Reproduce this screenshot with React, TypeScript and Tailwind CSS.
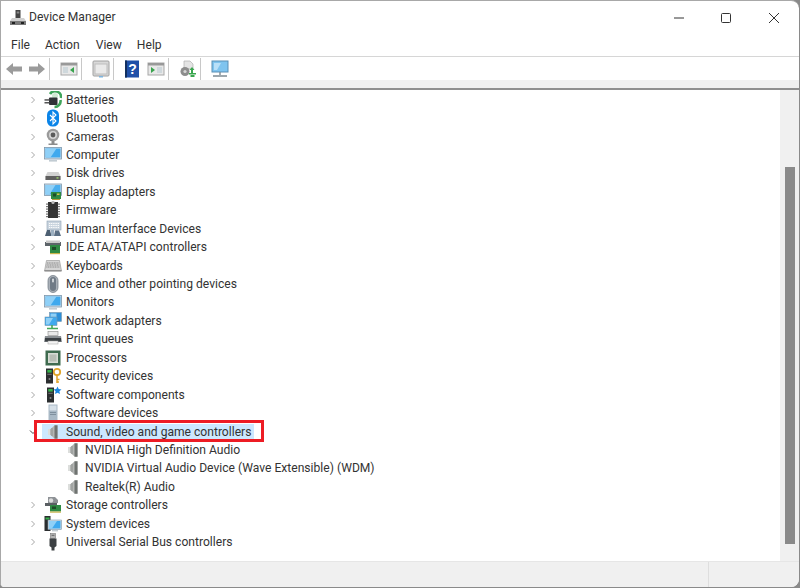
import React from "react";

type IconProps = { children: React.ReactNode; size?: number; className?: string };
const Svg = ({ children, size = 18, className = "" }: IconProps) => (
  <svg width={size} height={size} viewBox="0 0 18 18" className={`shrink-0 ${className}`}>
    {children}
  </svg>
);

const Battery = () => (
  <Svg>
    <path d="M6 3a6 6 0 0 1 11 4" fill="none" stroke="#3fa45b" strokeWidth="2.6" />
    <path d="M16.500 9a6 6 0 0 1-6 7" fill="none" stroke="#3fa45b" strokeWidth="2.6" />
    <circle cx="11" cy="5" r="3" fill="#cfe8d2" />
    <rect x="5" y="6.500" width="8.500" height="7.500" rx="1" fill="#2f3337" />
    <rect x="0.500" y="8.200" width="5" height="1.500" fill="#555" />
    <rect x="0.500" y="11" width="5" height="1.500" fill="#555" />
  </Svg>
);
const Bluetooth = () => (
  <Svg>
    <rect x="3" y="0.500" width="12" height="17" rx="5.500" fill="#0a84e8" />
    <path d="M6 6l6 6-3 3V3l3 3-6 6" fill="none" stroke="#fff" strokeWidth="1.100" />
  </Svg>
);
const Camera = () => (
  <Svg>
    <circle cx="9" cy="7" r="6.300" fill="#9a9a9a" />
    <circle cx="9" cy="7" r="4" fill="#d4d4d4" />
    <circle cx="9" cy="7" r="2.400" fill="#5a5a5a" />
    <path d="M7.500 13h3v2.500h3V17h-9v-1.500h3z" fill="#8c8c8c" />
  </Svg>
);
const Monitor = () => (
  <Svg>
    <rect x="0.500" y="1.500" width="17" height="11.500" fill="#d3dde4" stroke="#7b97ad" strokeWidth="0.8" />
    <rect x="1.500" y="2.500" width="15" height="9" fill="#3fa9ee" />
    <path d="M1.500 2.500h11l-6 9h-5z" fill="#8fd0f7" />
    <rect x="5" y="14" width="8" height="1.600" fill="#c2ccd3" />
  </Svg>
);
const Disk = () => (
  <Svg>
    <path d="M3.500 8h11l2 4v4h-15v-4z" fill="#d2d2d2" />
    <rect x="1.500" y="12" width="15" height="4" fill="#5f5f5f" />
    <rect x="12.500" y="13.200" width="2" height="1.400" fill="#9ed36b" />
  </Svg>
);
const Display = () => (
  <Svg>
    <rect x="0.500" y="1" width="17" height="11.500" fill="#d3dde4" stroke="#7b97ad" strokeWidth="0.8" />
    <rect x="1.500" y="2" width="15" height="9.500" fill="#4aaeee" />
    <path d="M1.500 2h10l-6 9.500h-4z" fill="#8fd0f7" />
    <rect x="7" y="9" width="10" height="7" fill="#2f8a43" />
    <rect x="9" y="10.500" width="3" height="3" fill="#1e4d29" />
    <rect x="13" y="10.500" width="2.500" height="1.500" fill="#d6c24d" />
    <rect x="8" y="16" width="8" height="1" fill="#b59a3b" />
  </Svg>
);
const Firmware = () => (
  <Svg>
    <rect x="4" y="1" width="10" height="16" fill="#333" />
    <circle cx="9" cy="1.400" r="1.600" fill="#bbb" />
    {[2.5, 5, 7.5, 10, 12.5, 15].map((y) => (
      <g key={y}>
        <rect x="2" y={y} width="2.200" height="1.200" fill="#777" />
        <rect x="13.800" y={y} width="2.200" height="1.200" fill="#777" />
      </g>
    ))}
  </Svg>
);
const Hid = () => (
  <Svg>
    <rect x="3" y="1" width="14" height="9" fill="#c9d4de" stroke="#8fa2b4" strokeWidth="0.6" />
    <path d="M5 3.500h10M5 5.500h10M5 7.500h10" stroke="#fff" strokeWidth="0.9" strokeDasharray="1.2 0.6" />
    <path d="M1 16l2-6 3 0 1.500 6z" fill="#4c5f72" />
    <path d="M10 16l1-5.500h4l2 5.500z" fill="#5c7085" />
    <rect x="7" y="10" width="3" height="6" fill="#9db0c1" />
  </Svg>
);
const Ide = () => (
  <Svg>
    <path d="M1 4h16v4H1z" fill="#5d6469" />
    <rect x="2" y="2.500" width="14" height="2.500" fill="#c9c9c9" />
    <rect x="6" y="7" width="10" height="8" fill="#2f8a43" />
    <rect x="8" y="9" width="4" height="3" fill="#1e4d29" />
    <rect x="6" y="15" width="10" height="1.200" fill="#c9b34a" />
  </Svg>
);
const Keyboard = () => (
  <Svg>
    <path d="M2.500 3.500h13l2 10.500H.5z" fill="#d5d5d5" stroke="#8f8f8f" strokeWidth="0.6" />
    <path d="M3 6h12M2.600 8h12.800M2.300 10h13.400" stroke="#8a8a8a" strokeWidth="1" strokeDasharray="1.2 0.5" />
    <rect x="0.500" y="13" width="17" height="1.400" fill="#8f8f8f" />
  </Svg>
);
const Mouse = () => (
  <Svg>
    <rect x="4" y="0.500" width="10" height="17" rx="5" fill="#a9b0b8" stroke="#6b7580" strokeWidth="0.7" />
    <rect x="6" y="2" width="6" height="14" rx="3" fill="#6f7a86" />
    <rect x="8.200" y="3.500" width="1.600" height="4" rx="0.8" fill="#e3e6e9" />
  </Svg>
);
const Network = () => (
  <Svg>
    <rect x="5.500" y="0.500" width="12" height="9" fill="#2d8fd8" stroke="#7b97ad" strokeWidth="0.6" />
    <rect x="6.500" y="1.500" width="6" height="4" fill="#8fd0f7" />
    <rect x="1" y="5" width="12" height="8.500" fill="#3fa9ee" stroke="#7b97ad" strokeWidth="0.6" />
    <path d="M2 6h7l-4 6.500H2z" fill="#8fd0f7" />
    <path d="M3 16.500h11M8 13v3.500" stroke="#45a85a" strokeWidth="1.600" />
  </Svg>
);
const Printer = () => (
  <Svg>
    <rect x="4" y="1.500" width="10" height="4" fill="#e8e8e8" stroke="#8b8b8b" strokeWidth="0.6" />
    <path d="M1 6h16l1 6H0z" fill="#8a8f93" />
    <rect x="1" y="8" width="16" height="3.500" fill="#3a3f43" />
    <rect x="4" y="11" width="10" height="3" fill="#f4f4f4" stroke="#a0a0a0" strokeWidth="0.5" />
  </Svg>
);
const Processor = () => (
  <Svg>
    <rect x="1.500" y="1.500" width="15" height="15" fill="#3f6b4f" />
    <rect x="4" y="4" width="10" height="10" fill="#d7dcd4" />
    <rect x="5.500" y="5.500" width="7" height="7" fill="#b8beb5" />
  </Svg>
);
const Tower = ({ x = 2 }: { x?: number }) => (
  <g>
    <rect x={x} y="1.500" width="7" height="15" fill="#2b2e30" />
    <rect x={x + 1.3} y="3" width="4.400" height="2.600" fill="#35b24a" />
    <rect x={x + 1.3} y="6.800" width="4.400" height="1" fill="#777" />
    <rect x={x + 2.5} y="11" width="2" height="2" rx="1" fill="#888" />
  </g>
);
const Security = () => (
  <Svg>
    <Tower />
    <circle cx="13" cy="5" r="3.200" fill="none" stroke="#e0a52a" strokeWidth="1.800" />
    <path d="M13 8v8M13 12.500h2.500M13 15h2" stroke="#e0a52a" strokeWidth="1.500" />
  </Svg>
);
const SoftwareComp = () => (
  <Svg>
    <Tower x={3} />
    <path d="M13.500 0.500l1.200 2.600 2.800.3-2.100 1.900.6 2.800-2.500-1.400-2.500 1.400.6-2.800-2.100-1.900 2.800-.3z" fill="#1b86e0" />
  </Svg>
);
const SoftwareDev = () => (
  <Svg>
    <rect x="4.500" y="0.500" width="9" height="17" fill="#a9b9c6" />
    <rect x="5.500" y="1.500" width="7" height="5" fill="#d6e0e8" />
    <rect x="6" y="8" width="6" height="1" fill="#7f909e" />
    <rect x="6" y="10" width="6" height="1" fill="#7f909e" />
  </Svg>
);
const Speaker = () => (
  <Svg>
    <path d="M4 6h2.500L11 2h2.500v14H11l-4.500-4H4z" fill="#b4b6b4" />
    <path d="M4 6h2v6H4z" fill="#dcdedc" />
    <path d="M10.500 2.400h3v13.200h-3z" fill="#6f7370" />
    <path d="M7.500 5h1v8h-1z" fill="#8e918f" />
  </Svg>
);
const Storage = () => (
  <Svg>
    <path d="M4 1h7l3 3v3H4z" fill="#8e9296" />
    <circle cx="7" cy="4.500" r="2.200" fill="#dcdcdc" />
    <path d="M1 7h12v3H1z" fill="#5a5f63" />
    <rect x="6" y="9" width="11" height="6.500" fill="#2f8a43" />
    <rect x="8" y="10.500" width="4" height="2.500" fill="#1e4d29" />
    <rect x="6" y="15.500" width="11" height="1.200" fill="#c9b34a" />
  </Svg>
);
const SystemDev = () => (
  <Svg>
    <rect x="0.500" y="1" width="6" height="15" fill="#2b2e30" />
    <rect x="1.500" y="2.500" width="4" height="2" fill="#35b24a" />
    <rect x="4" y="5" width="13.500" height="9.500" fill="#d3dde4" stroke="#7b97ad" strokeWidth="0.6" />
    <rect x="5" y="6" width="11.500" height="7.500" fill="#3fa9ee" />
    <path d="M5 6h8l-5 7.500H5z" fill="#8fd0f7" />
    <rect x="8" y="15" width="6" height="1.400" fill="#c2ccd3" />
  </Svg>
);
const Usb = () => (
  <Svg>
    <rect x="6.500" y="0.500" width="5" height="5" fill="#b5b5b5" stroke="#666" strokeWidth="0.5" />
    <rect x="7.700" y="1.800" width="1" height="1" fill="#444" />
    <rect x="9.300" y="1.800" width="1" height="1" fill="#444" />
    <path d="M5.500 5.500h7V13l-2 1.500V17.500h-3V14.500l-2-1.500z" fill="#3c4043" />
  </Svg>
);

const Chevron = ({ open }: { open?: boolean }) => (
  <svg width="8" height="8" viewBox="0 0 8 8" className="shrink-0">
    <path d={open ? "M1 2.500l3 3 3-3" : "M2.500 1l3 3-3 3"} fill="none" stroke={open ? "#444" : "#a6a6a6"} strokeWidth="1" />
  </svg>
);

const rowClass = "flex items-center h-[18.44px] text-[12.1px] text-[#333333] whitespace-nowrap";

const Row = ({ icon, label }: { icon: React.ReactNode; label: string }) => (
  <div className={`${rowClass} pl-[28px]`}>
    <Chevron />
    <span className="ml-[7px] w-[18px] flex">{icon}</span>
    <span className="ml-[4px]">{label}</span>
  </div>
);
const Child = ({ label }: { label: string }) => (
  <div className={`${rowClass} pl-[63px]`}>
    <Speaker />
    <span className="ml-[3px]">{label}</span>
  </div>
);

const Sep = () => <div className="w-px h-[22px] bg-[#c8c8c8] ml-[3px]" />;

export default function App() {
  return (
    <div className="w-[800px] h-[588px] bg-[#8a8a8a] font-['Roboto','Open_Sans',sans-serif]">
      <div className="w-[799px] h-[587px] flex flex-col bg-white border-t border-l border-[#a8a8a8] rounded-tr-lg rounded-bl-sm rounded-br-lg overflow-hidden">
        <div className="h-[33px] flex items-center shrink-0">
          <svg width="18" height="18" viewBox="0 0 18 18" className="ml-[8px]">
            <rect x="6.500" y="1" width="5" height="8" fill="#444" />
            <rect x="7.700" y="2.500" width="2.600" height="2" fill="#888" />
            <path d="M3 9h12l2 3v4H1v-4z" fill="#d0d0d0" />
            <rect x="1" y="12" width="16" height="4" fill="#7a7a7a" />
            <rect x="3" y="13" width="3" height="2" fill="#222" />
            <rect x="12" y="13" width="3" height="2" fill="#222" />
          </svg>
          <span className="ml-[2px] text-[12.1px] text-[#333333]">Device Manager</span>
          <div className="ml-auto flex items-center">
            <svg width="12" height="12" viewBox="0 0 12 12" className="mr-[35px]"><path d="M1 6h10" stroke="#333" strokeWidth="1" /></svg>
            <svg width="12" height="12" viewBox="0 0 12 12" className="mr-[36px]"><rect x="1.500" y="1.500" width="9" height="9" rx="1" fill="none" stroke="#333" strokeWidth="1" /></svg>
            <svg width="12" height="12" viewBox="0 0 12 12" className="mr-[19px]"><path d="M1 1l10 10M11 1L1 11" stroke="#333" strokeWidth="1" /></svg>
          </div>
        </div>
        <div className="h-[23px] flex items-center text-[12.1px] text-[#333333] border-b border-[#d6d6d6] shrink-0">
          <span className="ml-[10px]">File</span>
          <span className="ml-[15px]">Action</span>
          <span className="ml-[16px]">View</span>
          <span className="ml-[15px]">Help</span>
        </div>
        <div className="h-[23px] flex items-center pl-[4px] shrink-0">
          <svg width="18" height="16" viewBox="0 0 18 16"><path d="M1 8l7-6v3.500h9v5H8V14z" fill="#9b9b9b" /></svg>
          <svg width="18" height="16" viewBox="0 0 18 16" className="ml-[5px]"><path d="M17 8l-7-6v3.500H1v5h9V14z" fill="#9b9b9b" /></svg>
          <Sep />
          <svg width="18" height="16" viewBox="0 0 18 16" className="ml-[10px]">
            <rect x="1" y="2" width="16" height="12" fill="#e8e8e8" stroke="#a8a8a8" />
            <rect x="1" y="2" width="16" height="2.500" fill="#999" />
            <rect x="3" y="6" width="5" height="6" fill="#cfd8dc" />
            <path d="M14 6v6l-4-3z" fill="#38a34d" />
          </svg>
          <Sep />
          <svg width="18" height="18" viewBox="0 0 18 18" className="ml-[10px]">
            <rect x="1" y="1" width="16" height="15" rx="1" fill="#d9d9d9" stroke="#a0a0a0" />
            <rect x="3" y="4" width="12" height="10" fill="#eaeaea" stroke="#bdbdbd" />
            <rect x="7" y="16" width="4" height="1.500" fill="#7db5e0" />
          </svg>
          <Sep />
          <svg width="14" height="18" viewBox="0 0 14 18" className="ml-[11px]">
            <rect x="0" y="0.500" width="14" height="17" fill="#1f4fa8" />
            <rect x="0" y="0.500" width="2" height="17" fill="#12305f" />
            <text x="7.500" y="14" fontSize="14" fontWeight="700" fill="#ffffff" textAnchor="middle" fontFamily="Liberation Sans">?</text>
          </svg>
          <svg width="18" height="16" viewBox="0 0 18 16" className="ml-[8px]">
            <rect x="1" y="2" width="16" height="12" fill="#e8e8e8" stroke="#a8a8a8" />
            <rect x="1" y="2" width="16" height="2.500" fill="#999" />
            <path d="M4 6v6l4-3z" fill="#38a34d" />
            <rect x="10" y="6" width="5" height="6" fill="#cfd8dc" />
          </svg>
          <Sep />
          <svg width="18" height="18" viewBox="0 0 18 18" className="ml-[10px]">
            <path d="M5 1h6l3 3v5H5z" fill="#e4e4e4" stroke="#b0b0b0" strokeWidth="0.7" />
            <circle cx="6" cy="11.500" r="4.500" fill="#8d8d8d" />
            <circle cx="6" cy="11.500" r="1.600" fill="#d5d5d5" />
            <path d="M13 7l2.500 3H14v3h-2v-3h-1.500z" fill="#3aa64f" />
            <path d="M10 13h7v1.500h-7zM11.500 15h4v2h-4z" fill="#3aa64f" />
          </svg>
          <Sep />
          <svg width="18" height="18" viewBox="0 0 18 18" className="ml-[10px]">
            <rect x="1" y="1" width="16" height="11" fill="#7fc4ef" stroke="#5a8fb5" />
            <path d="M3 3h7l-4 7H3z" fill="#b9e0f8" />
            <path d="M9 12v3M2 16h14" stroke="#7d8a93" strokeWidth="1.400" />
          </svg>
        </div>
        <div className="h-[8px] bg-[#f0f0f0] shrink-0" />
        <div className="h-[2px] bg-[#8f8f8f] shrink-0" />
        <div className="flex-1 flex min-h-0">
          <div className="flex-1 min-w-0 pt-[0.5px]">
            <Row icon={<Battery />} label="Batteries" />
            <Row icon={<Bluetooth />} label="Bluetooth" />
            <Row icon={<Camera />} label="Cameras" />
            <Row icon={<Monitor />} label="Computer" />
            <Row icon={<Disk />} label="Disk drives" />
            <Row icon={<Display />} label="Display adapters" />
            <Row icon={<Firmware />} label="Firmware" />
            <Row icon={<Hid />} label="Human Interface Devices" />
            <Row icon={<Ide />} label="IDE ATA/ATAPI controllers" />
            <Row icon={<Keyboard />} label="Keyboards" />
            <Row icon={<Mouse />} label="Mice and other pointing devices" />
            <Row icon={<Monitor />} label="Monitors" />
            <Row icon={<Network />} label="Network adapters" />
            <Row icon={<Printer />} label="Print queues" />
            <Row icon={<Processor />} label="Processors" />
            <Row icon={<Security />} label="Security devices" />
            <Row icon={<SoftwareComp />} label="Software components" />
            <Row icon={<SoftwareDev />} label="Software devices" />
            <div className={`${rowClass} pl-[28px] relative`}>
              <Chevron open />
              <div className="flex items-center h-[16px] ml-[5px] pl-[2px] pr-[3px] bg-[#cce8ff]">
                <span className="w-[18px] flex"><Speaker /></span>
                <span className="ml-[4px]">Sound, video and game controllers</span>
              </div>
              <div className="absolute left-[33px] top-[-2.5px] w-[230px] h-[22px] border-[3px] border-[#ed1c24]" />
            </div>
            <Child label="NVIDIA High Definition Audio" />
            <Child label="NVIDIA Virtual Audio Device (Wave Extensible) (WDM)" />
            <Child label="Realtek(R) Audio" />
            <Row icon={<Storage />} label="Storage controllers" />
            <Row icon={<SystemDev />} label="System devices" />
            <Row icon={<Usb />} label="Universal Serial Bus controllers" />
          </div>
          <div className="w-[19px] bg-[#f0f0f0] pt-[77px] shrink-0 flex justify-center">
            <div className="w-[10px] h-[377px] bg-[#8a8a8a]" />
          </div>
        </div>
        <div className="h-[26px] bg-[#f0f0f0] border-t border-[#e6e6e6] shrink-0 flex justify-end">
          <div className="w-[91px] border-l border-[#dedede]" />
        </div>
      </div>
    </div>
  );
}
